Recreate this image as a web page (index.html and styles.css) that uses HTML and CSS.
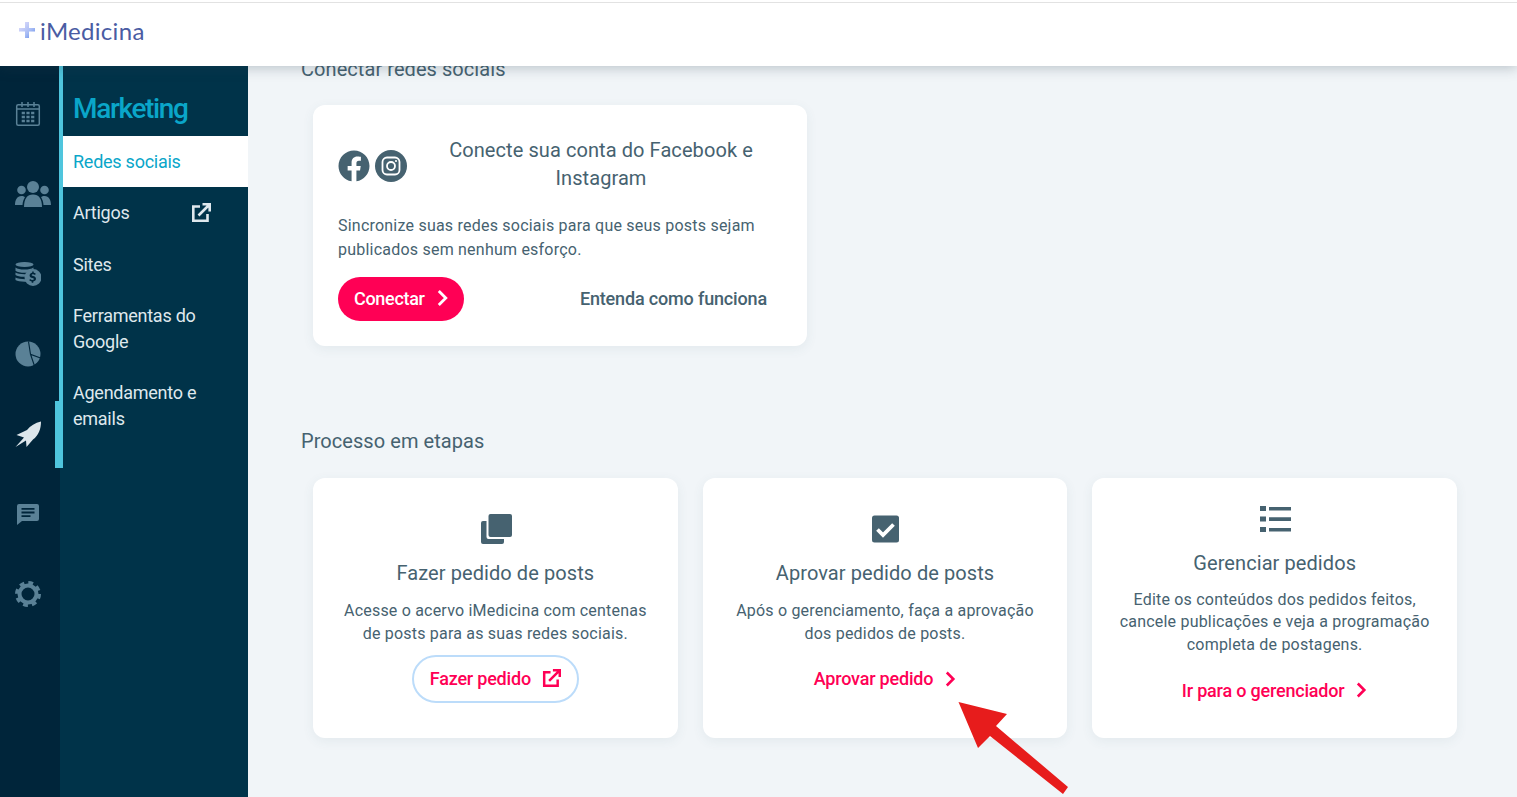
FILE: index.html
```html
<html>
    <head>
        <meta charset="utf-8">
        <title>iMedicina - Marketing</title>
        <link rel="stylesheet" href="styles.css">
    </head>
    <body>
        <header class="topBar">
            <div class="logo">
                <svg class="logoCross" width="18" height="18" viewBox="0 0 18 18">
                    <defs>
                        <linearGradient id="crossColor" x1="0" y1="0" x2="1" y2="1">
                            <stop offset="0" stop-color="#e6e0fb"/>
                            <stop offset="0.6" stop-color="#a9bdf5"/>
                            <stop offset="1" stop-color="#5f8ae8"/>
                        </linearGradient>
                    </defs>
                    <path fill="url(#crossColor)" d="M7 1h4v6h6v3.6h-6V17H7v-6.4H1V7h6z"/>
                </svg>
                <span>iMedicina</span>
            </div>
        </header>
        <div class="layout">
            <nav class="rail">
                <a class="railItem">
                    <svg width="26" height="26" viewBox="0 0 26 26" fill="none" stroke="currentColor" stroke-width="1.5">
                        <rect x="1.7" y="3.7" width="22.6" height="20.6" rx="1.5"/>
                        <path d="M1.7 8h22.6M7 1v5M13 1v5M19 1v5"/>
                        <path stroke-width="2.400" stroke-dasharray="3.200 1.500" d="M6.700 12h12.600M6.700 16h12.600M6.700 20h12.600"/>
                    </svg>
                </a>
                <a class="railItem">
                    <svg class="usersIcon" width="36" height="26" viewBox="0 0 36 26" fill="currentColor">
                        <circle cx="18" cy="6" r="6"/>
                        <circle cx="6.5" cy="9" r="4.3"/>
                        <circle cx="29.5" cy="9" r="4.3"/>
                        <path d="M9 26c0-8 3-12.500 9-12.500s9 4.500 9 12.500z"/>
                        <path d="M0 24c0-5 2-9 6.500-9 1.500 0 2.500.5 3.500 1-1.500 2.500-2.300 5-2.500 8z"/>
                        <path d="M36 24c0-5-2-9-6.500-9-1.500 0-2.500.5-3.500 1 1.500 2.500 2.300 5 2.500 8z"/>
                    </svg>
                </a>
                <a class="railItem">
                    <svg width="26" height="24" viewBox="0 0 26 24" fill="currentColor">
                        <ellipse cx="9.500" cy="2.500" rx="9" ry="2.500"/>
                        <path d="M.5 5.500c2 1.500 4.500 2 9 2 4 0 7-.5 9-2v1.500c-3 .8-5 2-6 3.500-1 .2-2 .2-3 .2-4 0-7-.6-9-2z"/>
                        <path d="M.5 10.500c2 1.300 5 1.800 10.500 1.700-.3.800-.5 1.700-.5 2.500-4.500.3-8-.4-10-1.700z"/>
                        <path d="M.5 15.500c2 1.200 5.500 1.700 10 1.700.1.900.4 1.700.8 2.500-5 .2-8.800-.5-10.800-1.700z"/>
                        <path fill-rule="evenodd" d="M18 7a8.500 8.500 0 1 1 0 17 8.500 8.500 0 0 1 0-17zm-.8 2.500v1.300c-1.600.3-2.600 1.300-2.600 2.600 0 1.600 1.300 2.200 2.800 2.600 1.100.3 1.500.6 1.500 1.100s-.6.900-1.500.9c-.9 0-1.700-.4-2.300-.9l-.9 1.200c.7.600 1.600 1 2.500 1.100v1.300h1.600v-1.300c1.700-.3 2.700-1.300 2.700-2.700 0-1.600-1.300-2.300-2.900-2.700-1.100-.3-1.400-.5-1.400-1s.5-.8 1.300-.8c.7 0 1.400.3 2 .7l.8-1.200c-.6-.5-1.400-.8-2.100-.9V9.500z"/>
                    </svg>
                </a>
                <a class="railItem">
                    <svg width="26" height="26" viewBox="0 0 26 26">
                        <circle cx="13" cy="13" r="12.500" fill="currentColor"/>
                        <path fill="none" stroke="#00253a" stroke-width="1.100" d="M13.500 .5l2 12.800L25.500 17M15.500 13.300l4 11.700"/>
                    </svg>
                </a>
                <a class="railItem active">
                    <svg width="26" height="26" viewBox="0 0 26 26" fill="currentColor">
                        <path d="M26 .5C20 2 15.500 4.500 12 9L1.500 14l7.500 2.500L.5 26 11 19.500l.5 6.500 6.500-7.500C23.500 14.500 26 8 26 .5z"/>
                    </svg>
                </a>
                <a class="railItem">
                    <svg width="22" height="21" viewBox="0 0 22 21">
                        <path fill="currentColor" d="M2 0h18a2 2 0 0 1 2 2v13a2 2 0 0 1-2 2H5l-5 4V2a2 2 0 0 1 2-2z"/>
                        <path fill="#00253a" d="M4.500 4h13v1.800h-13zM4.500 7.600h13v1.800h-13zM4.500 11.200h9v1.800h-9z"/>
                    </svg>
                </a>
                <a class="railItem">
                    <svg width="26" height="26" viewBox="0 0 26 26" fill="none" stroke="currentColor">
                        <circle cx="13" cy="13" r="8.500" stroke-width="4"/>
                        <circle cx="13" cy="13" r="11" stroke-width="4" stroke-dasharray="4.640 4"/>
                    </svg>
                </a>
            </nav>
            <aside class="subMenu">
                <h2 class="subTitle">Marketing</h2>
                <a class="subItem current">Redes sociais</a>
                <a class="subItem withIcon">
                    Artigos
                    <svg width="20" height="20" viewBox="0 0 20 20" fill="none" stroke="currentColor" stroke-width="2.600">
                        <path d="M9 3.500H2.300v14.200h14.200V11"/>
                        <path d="M7.500 12.500L18 2M11.500 1.300h7.200v7.200"/>
                    </svg>
                </a>
                <a class="subItem">Sites</a>
                <a class="subItem">Ferramentas do Google</a>
                <a class="subItem">Agendamento e emails</a>
            </aside>
            <main class="content">
                <h3 class="sectionTitle firstTitle">Conectar redes sociais</h3>
                <section class="card connectCard">
                    <div class="connectTop">
                        <div class="socialIcons">
                            <svg width="32" height="32" viewBox="0 0 512 512" fill="currentColor">
                                <path d="M504 256C504 119 393 8 256 8S8 119 8 256c0 123.780 90.690 226.380 209.250 245V327.690h-63V256h63v-54.640c0-62.150 37-96.480 93.670-96.480 27.140 0 55.520 4.840 55.520 4.840v61h-31.280c-30.800 0-40.410 19.120-40.410 38.730V256h68.780l-11 71.690h-57.780V501C413.310 482.380 504 379.780 504 256z"/>
                            </svg>
                            <svg width="32" height="32" viewBox="0 0 32 32">
                                <circle cx="16" cy="16" r="16" fill="currentColor"/>
                                <rect x="7.500" y="7.500" width="17" height="17" rx="4.500" fill="none" stroke="#fff" stroke-width="1.800"/>
                                <circle cx="16" cy="16" r="4" fill="none" stroke="#fff" stroke-width="1.800"/>
                                <circle cx="21" cy="11" r="1.100" fill="#fff"/>
                            </svg>
                        </div>
                        <h4 class="connectTitle">Conecte sua conta do Facebook e Instagram</h4>
                    </div>
                    <p class="connectText">Sincronize suas redes sociais para que seus posts sejam publicados sem nenhum esforço.</p>
                    <div class="connectActions">
                        <a class="btnPink">Conectar
                            <svg width="11" height="18" viewBox="0 0 11 18" fill="none" stroke="currentColor" stroke-width="2.800"><path d="M1.800 2l7 7-7 7"/></svg>
                        </a>
                        <a class="howLink">Entenda como funciona</a>
                    </div>
                </section>

                <h3 class="sectionTitle stepsTitle">Processo em etapas</h3>
                <div class="steps">
                    <section class="card stepCard">
                        <svg class="stepIcon nudge" width="31" height="30" viewBox="0 0 31 30" fill="currentColor">
                            <rect x="7.500" y="0" width="23.500" height="23" rx="2"/>
                            <path d="M5.500 7v16a2 2 0 0 0 2 2h15.500v3a2 2 0 0 1-2 2H2a2 2 0 0 1-2-2V9a2 2 0 0 1 2-2z"/>
                        </svg>
                        <h4 class="stepTitle">Fazer pedido de posts</h4>
                        <p class="stepText">Acesse o acervo iMedicina com centenas<br>de posts para as suas redes sociais.</p>
                        <a class="stepLink outlined">Fazer pedido
                            <svg width="19" height="19" viewBox="0 0 20 20" fill="none" stroke="currentColor" stroke-width="2.600">
                                <path d="M9 3.500H2.300v14.200h14.200V11"/>
                                <path d="M7.500 12.500L18 2M11.500 1.300h7.200v7.200"/>
                            </svg>
                        </a>
                    </section>
                    <section class="card stepCard">
                        <svg class="stepIcon nudge" width="27" height="30" viewBox="0 0 27 30">
                            <rect x="0" y="1.500" width="27" height="27" rx="2.500" fill="currentColor"/>
                            <path d="M5.500 15.500l5.500 5.500L21.500 10.500" fill="none" stroke="#fff" stroke-width="3.800"/>
                        </svg>
                        <h4 class="stepTitle">Aprovar pedido de posts</h4>
                        <p class="stepText">Após o gerenciamento, faça a aprovação<br>dos pedidos de posts.</p>
                        <a class="stepLink">Aprovar pedido
                            <svg width="11" height="16" viewBox="0 0 11 16" fill="none" stroke="currentColor" stroke-width="2.600"><path d="M1.800 1.500l6.500 6.500-6.500 6.500"/></svg>
                        </a>
                    </section>
                    <section class="card stepCard managerCard">
                        <svg class="stepIcon nudge" width="31" height="30" viewBox="0 0 31 30" fill="currentColor">
                            <path d="M0 2h6v5H0zM0 12.500h6v5H0zM0 23h6v5H0zM9 3h22v3.600H9zM9 13.300h22v3.600H9zM9 24h22v3.600H9z"/>
                        </svg>
                        <h4 class="stepTitle">Gerenciar pedidos</h4>
                        <p class="stepText">Edite os conteúdos dos pedidos feitos,<br>cancele publicações e veja a programação<br>completa de postagens.</p>
                        <a class="stepLink">Ir para o gerenciador
                            <svg width="11" height="16" viewBox="0 0 11 16" fill="none" stroke="currentColor" stroke-width="2.600"><path d="M1.800 1.500l6.500 6.500-6.500 6.500"/></svg>
                        </a>
                    </section>
                </div>
            </main>
        </div>
        <!-- red arrow drawn on top of the screenshot -->
        <svg class="redArrow" width="120" height="100" viewBox="0 0 120 100">
            <path fill="#e71c1c" d="M8.500 2L57 14 46 26 118 87 113 94 40 36 28 48z"/>
        </svg>
    </body>
</html>
```
FILE: styles.css
```css
* {
    box-sizing: border-box;
}
html, body {
    height: 100%;
}
body {
    margin: 0;
    font-family: Roboto, "Liberation Sans", sans-serif;
    color: #466270;
    background-color: #f1f5f8;
    overflow: hidden;
    display: flex;
    flex-direction: column;
}
a {
    text-decoration: none;
}
h2, h3, h4, p {
    margin: 0;
    font-weight: 400;
}

/* top bar */
.topBar {
    flex: none;
    height: 66px;
    background-color: white;
    border-top: 2px solid white;
    position: relative;
    z-index: 2;
    box-shadow: 0 2px 12px rgba(40, 60, 75, 0.28);
    display: flex;
    align-items: center;
    background-image: linear-gradient(#e2e2e2, #e2e2e2);
    background-size: 100% 1px;
    background-repeat: no-repeat;
    padding-bottom: 8px;
}
.logo {
    display: flex;
    align-items: center;
    gap: 4px;
    margin-left: 18px;
    font-family: Lato, sans-serif;
    font-size: 24px;
    font-weight: 400;
    color: #4a5ca3;
    letter-spacing: 0.3px;
}

/* left columns */
.layout {
    flex: 1;
    display: flex;
    min-height: 0;
}
.rail {
    flex: none;
    width: 60px;
    background-color: #00253a;
    padding-top: 8px;
}
.railItem {
    height: 80px;
    display: flex;
    align-items: center;
    justify-content: center;
    padding-right: 5px;
    color: #5a8196;
    position: relative;
}
.usersIcon {
    margin-left: 11px;
}
.railItem.active {
    color: #dce6eb;
}
.railItem.active::after {
    content: "";
    position: absolute;
    z-index: 1;
    left: 55px;
    top: 7px;
    width: 8px;
    height: 67px;
    background-color: #4fc5dd;
}
.subMenu {
    flex: none;
    width: 188px;
    background-color: #003349;
    position: relative;
}
.subMenu::before {
    content: "";
    position: absolute;
    left: -1px;
    top: 0;
    width: 4px;
    height: 336px;
    background-color: #4fc5dd;
}
.subTitle {
    height: 70px;
    padding: 26px 0 0 13px;
    font-size: 28px;
    line-height: 34px;
    font-weight: 500;
    letter-spacing: -1.35px;
    color: #0aa6c9;
}
.subItem {
    display: block;
    margin-left: 3px;
    padding: 13px 37px 12.3px 10px;
    font-size: 18px;
    line-height: 26px;
    letter-spacing: -0.25px;
    color: #dfe8ed;
}
.subItem.current {
    background-color: white;
    color: #0aa6c9;
}
.subItem.withIcon {
    display: flex;
    align-items: center;
    justify-content: space-between;
}

/* main content */
.content {
    flex: 1;
    min-width: 0;
    overflow: hidden;
    padding-left: 53px;
    padding-right: 60px;
}
.sectionTitle {
    font-size: 20px;
    line-height: 28px;
    letter-spacing: 0.06px;
}
.firstTitle {
    margin-top: -11px;
}
.card {
    background-color: white;
    border-radius: 12px;
    box-shadow: 0 3px 12px rgba(70, 98, 112, 0.08);
}
.connectCard {
    width: 494px;
    height: 241px;
    margin: 22px 0 0 12px;
    padding: 31px 25px 0;
}
.connectTop {
    display: flex;
    align-items: center;
}
.socialIcons {
    flex: none;
    display: flex;
    gap: 5px;
    width: 69px;
    color: #466270;
    margin-top: 3px;
}
.connectTitle {
    flex: 1;
    padding: 0 12px 0 25px;
    text-align: center;
    font-size: 20px;
    line-height: 28px;
    letter-spacing: 0.08px;
}
.connectText {
    margin-top: 22px;
    font-size: 16px;
    line-height: 24px;
    letter-spacing: 0.22px;
}
.connectActions {
    display: flex;
    align-items: center;
    justify-content: space-between;
    margin-top: 15px;
    padding-right: 15px;
}
.btnPink {
    display: flex;
    align-items: center;
    justify-content: space-between;
    width: 126px;
    height: 44px;
    padding: 0 16px 2px;
    border-radius: 22px;
    background-color: #ff0055;
    color: white;
    font-size: 18px;
    font-weight: 500;
    letter-spacing: -0.3px;
}
.howLink {
    margin-bottom: 2px;
    font-size: 18px;
    font-weight: 500;
    letter-spacing: -0.16px;
    color: #466270;
}
.stepsTitle {
    margin-top: 81px;
}
.steps {
    display: grid;
    grid-template-columns: repeat(3, 1fr);
    gap: 25px;
    margin: 23px 0 0 12px;
}
.stepCard {
    height: 260px;
    display: flex;
    flex-direction: column;
    align-items: center;
    justify-content: center;
    text-align: center;
}
.managerCard {
    padding-top: 2px;
}
.managerCard .stepText {
    line-height: 22.6px;
}
.stepIcon {
    flex: none;
    height: 30px;
    color: #466270;
}
.stepIcon.nudge {
    margin-left: 2px;
}
.stepTitle {
    margin-top: 15px;
    font-size: 20px;
    line-height: 28px;
    letter-spacing: 0.08px;
}
.stepText {
    margin-top: 12px;
    font-size: 16px;
    line-height: 23px;
    letter-spacing: 0.2px;
}
.stepLink {
    display: flex;
    align-items: center;
    justify-content: center;
    gap: 12px;
    height: 48px;
    margin-top: 10px;
    padding: 0 16px;
    border: 2.5px solid transparent;
    border-radius: 24px;
    color: #ff0055;
    font-size: 18px;
    font-weight: 500;
    letter-spacing: -0.2px;
}
.stepLink.outlined {
    border-color: #bcdcfa;
    gap: 11px;
}
.redArrow {
    position: absolute;
    left: 950px;
    top: 700px;
}
```
